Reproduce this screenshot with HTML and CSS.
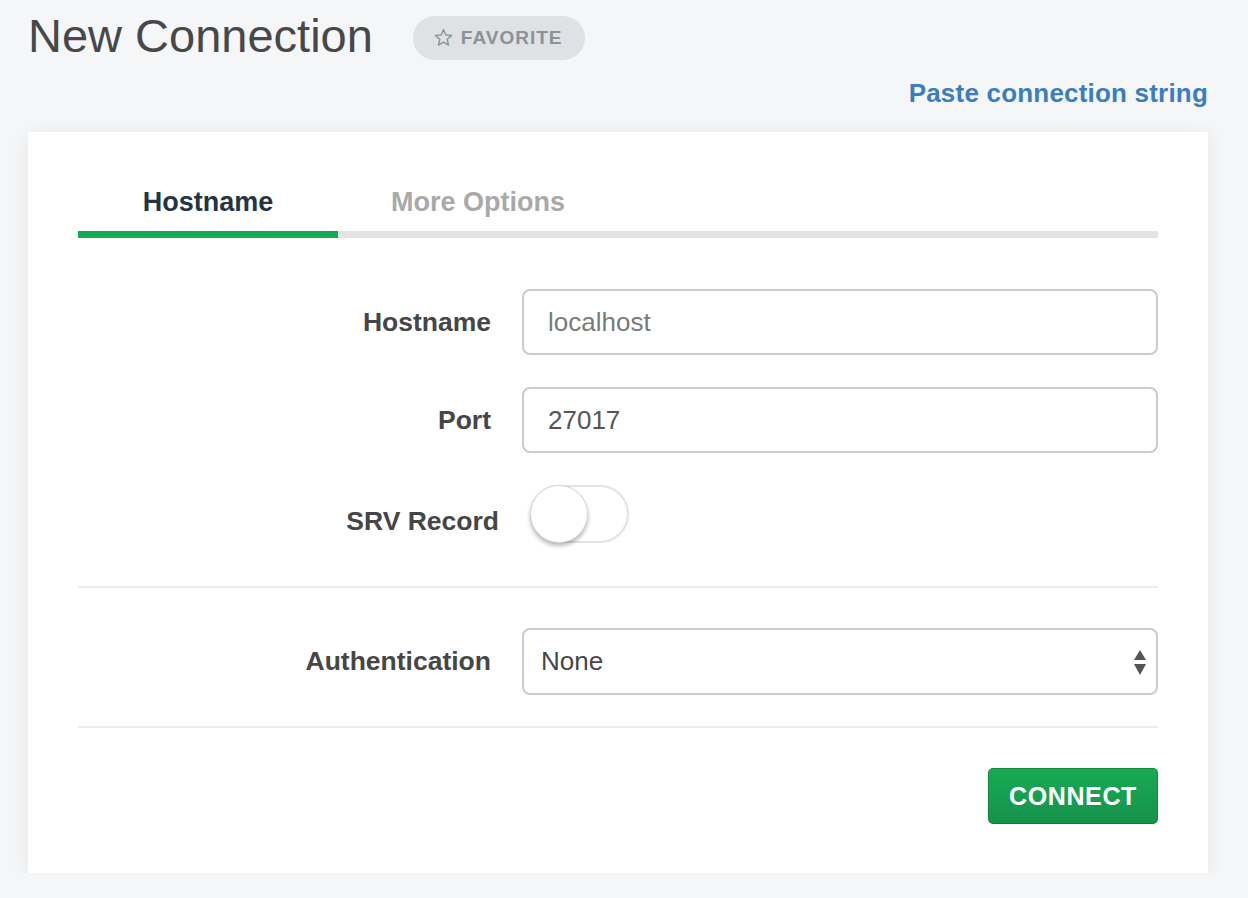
FILE: index.html
```html
<!DOCTYPE html>
<html lang="en">
<head>
<meta charset="utf-8">
<title>New Connection</title>
<link rel="stylesheet" href="styles.css">
</head>
<body>
<div class="page">
  <div class="header">
    <h1 class="title">New Connection</h1>
    <button class="favorite">
      <svg class="star" viewBox="0 0 20 20" width="19" height="19" aria-hidden="true">
        <polygon points="10,1.6 12.4,7.3 18.6,7.8 13.9,11.9 15.3,18 10,14.8 4.7,18 6.1,11.9 1.4,7.8 7.6,7.3" fill="none" stroke="#8a9599" stroke-width="1.5" stroke-linejoin="round"/>
      </svg>
      <span>FAVORITE</span>
    </button>
  </div>
  <div class="paste-row"><a class="paste" href="#">Paste connection string</a></div>
  <div class="card">
    <div class="tabs">
      <div class="tab tab-active">Hostname</div>
      <div class="tab tab-more">More Options</div>
    </div>
    <div class="form">
      <label class="label">Hostname</label>
      <div class="input placeholder">localhost</div>
      <label class="label">Port</label>
      <div class="input">27017</div>
      <label class="label label-srv">SRV Record</label>
      <div class="toggle-cell"><div class="toggle"><div class="knob"></div></div></div>
    </div>
    <div class="divider"></div>
    <div class="form form-auth">
      <label class="label">Authentication</label>
      <div class="input select">
        <span>None</span>
        <svg class="arrows" viewBox="0 0 12 26" width="12" height="26" aria-hidden="true">
          <polygon points="6,0 12,10 0,10" fill="#555"/>
          <polygon points="0,14 12,14 6,25" fill="#555"/>
        </svg>
      </div>
    </div>
    <div class="divider"></div>
    <div class="actions">
      <button class="connect">CONNECT</button>
    </div>
  </div>
</div>
</body>
</html>
```
FILE: styles.css
```css
html, body {
  margin: 0;
  padding: 0;
  background: #f5f6f8;
  font-family: "Liberation Sans", Arial, sans-serif;
}
.page {
  padding: 14px 40px 0 28px;
}
.header {
  display: flex;
  align-items: flex-start;
  height: 46px;
}
.title {
  margin: 0;
  font-size: 47px;
  line-height: 44px;
  font-weight: 400;
  letter-spacing: 0;
  color: #494848;
}
.favorite {
  margin: 2px 0 0 40px;
  height: 44px;
  width: 172px;
  border: none;
  border-radius: 22px;
  background: #dfe1e4;
  display: flex;
  align-items: center;
  padding: 0 0 0 21px;
  gap: 8px;
  font-family: "Liberation Sans", Arial, sans-serif;
  font-weight: 700;
  font-size: 19px;
  letter-spacing: 1px;
  color: #889397;
}
.star {
  display: block;
  margin-top: -1px;
}
.paste-row {
  display: flex;
  justify-content: flex-end;
  margin-top: 18px;
  height: 30px;
}
.paste {
  font-size: 26px;
  line-height: 30px;
  font-weight: 700;
  color: #3b7dbf;
  text-decoration: none;
  letter-spacing: 0.2px;
}
.card {
  margin-top: 24px;
  background: #fff;
  width: 1180px;
  box-sizing: border-box;
  height: 741px;
  padding: 48px 50px 0 50px;
  box-shadow: 0 3px 18px rgba(0, 0, 0, 0.07);
}
.tabs {
  display: flex;
  box-shadow: inset 0 -7px 0 #e4e4e4;
}
.tab {
  height: 51px;
  line-height: 44px;
  text-align: center;
  font-size: 27px;
  font-weight: 700;
  border-bottom: 7px solid transparent;
}
.tab-active {
  width: 260px;
  color: #243442;
  border-bottom-color: #13aa52;
}
.tab-more {
  width: 280px;
  color: #a9a9a9;
}
.form {
  display: grid;
  grid-template-columns: 413px 1fr;
  column-gap: 31px;
  row-gap: 32px;
  align-items: center;
  margin-top: 51px;
}
.label {
  text-align: right;
  font-size: 26.5px;
  font-weight: 700;
  color: #464646;
}
.label-srv {
  margin-right: -8px;
  padding-top: 14px;
}
.input {
  height: 66px;
  box-sizing: border-box;
  border: 2px solid #cbcbcb;
  border-radius: 8px;
  padding: 0 0 0 24px;
  display: flex;
  align-items: center;
  font-size: 26px;
  color: #555;
  background: #fff;
}
.placeholder {
  color: #7a7a7a;
}
.toggle-cell {
  padding-left: 8px;
}
.toggle {
  width: 99px;
  height: 58px;
  box-sizing: border-box;
  border: 2px solid #e2e2e2;
  border-radius: 29px;
  background: #fff;
  display: flex;
}
.knob {
  width: 58px;
  height: 58px;
  margin: -2px 0 0 -2px;
  box-sizing: border-box;
  border-radius: 50%;
  background: #fff;
  border: 1px solid #d8d8d8;
  box-shadow: 0 3px 4px rgba(0, 0, 0, 0.28);
}
.divider {
  height: 2px;
  background: #ececec;
  margin-top: 43px;
}
.form-auth {
  margin-top: 40px;
}
.select {
  height: 67px;
  padding-left: 17px;
  justify-content: space-between;
  padding-right: 10px;
  color: #474747;
}
.arrows {
  display: block;
  margin-top: 2px;
}
.form-auth + .divider {
  margin-top: 31px;
}
.actions {
  display: flex;
  justify-content: flex-end;
  margin-top: 40px;
}
.connect {
  width: 170px;
  height: 56px;
  border: 1px solid #14883f;
  border-bottom-color: #11783a;
  border-radius: 5px;
  background: linear-gradient(#17ab55, #16924b);
  color: #fff;
  font-family: "Liberation Sans", Arial, sans-serif;
  font-weight: 700;
  font-size: 25px;
  letter-spacing: 0.6px;
  padding: 0;
}
```
